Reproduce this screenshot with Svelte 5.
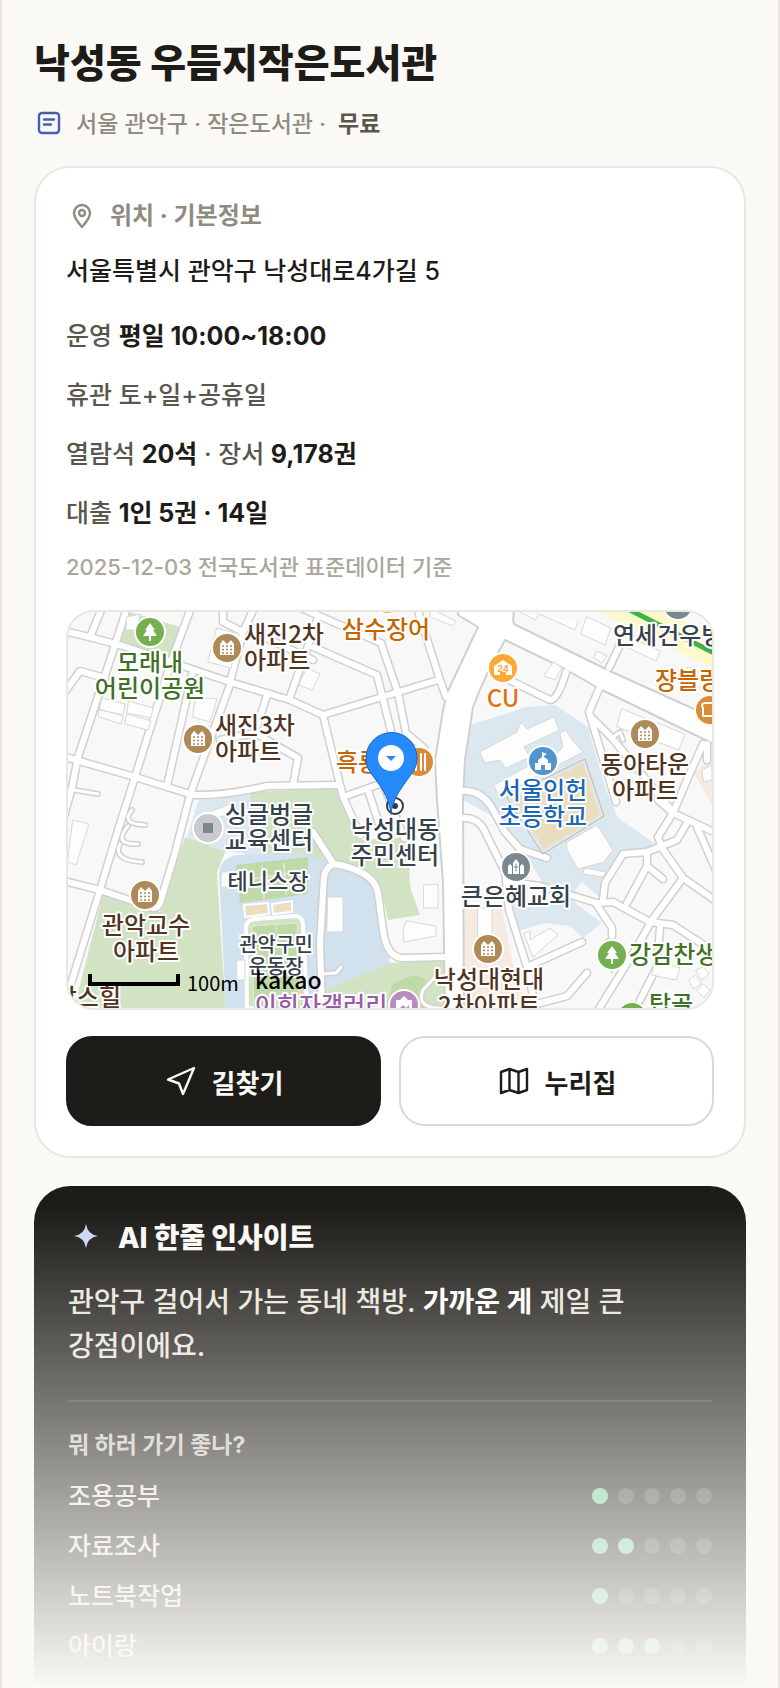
<script>
  const facts = [
    [{ t: "운영 " }, { t: "평일 10:00~18:00", b: true }],
    [{ t: "휴관 토+일+공휴일" }],
    [{ t: "열람석 " }, { t: "20석", b: true }, { t: " · 장서 " }, { t: "9,178권", b: true }],
    [{ t: "대출 " }, { t: "1인 5권 · 14일", b: true }],
  ];

  const scores = [
    { name: "조용공부", score: 1 },
    { name: "자료조사", score: 2 },
    { name: "노트북작업", score: 1 },
    { name: "아이랑", score: 3 },
  ];

  // coloured ground: parks, water, school yard
  const areas = [
    { c: "green", d: "M129 612L184 628L171 662L119 641Z" },
    { c: "green", d: "M185 837L226 850L217 872L221 940L226 1008H74L103 895L160 912Z" },
    { c: "green", d: "M250 792L338 788L350 815L362 840L400 838L413 850Q407 870 411 890L420 915L388 920L380 885L335 863L290 857L245 855Z" },
    { c: "sky", d: "M198 801Q222 792 249 793L252 812L262 856L220 850L187 837Z" },
    { c: "water", d: "M219 873Q221 857 238 855L300 853L335 863Q367 873 378 890L386 935Q388 955 391 965Q386 976 345 984L323 990V1008H226Z" },
    { c: "green", d: "M391 963L445 960V1008H324V990Q345 982 391 963Z" },
    { c: "lawn", d: "M392 985Q415 970 426 980Q418 1000 425 1008H382Q390 1000 392 985Z" },
    { c: "sky", d: "M469 725Q500 716 525 707L555 705L588 727L606 790L618 818L657 845L622 853L602 887L600 898L582 882L570 897L548 892L532 865L516 850L490 815L463 800Z" },
    { c: "sky", d: "M513 904L570 899L602 923L583 938L570 926L545 923L518 931Z" },
    { c: "peach", d: "M465 908H502L512 960L528 1008H464Z" },
    { c: "peach", d: "M694 773L712 757V805Z" },
    { c: "yellow", d: "M600 612H668L712 634V668Z" },
    { c: "lawn", d: "M236 865L308 857V894L240 903Z" },
    { c: "sand", d: "M244 905L268 903L269 914L245 917Z" },
    { c: "sand", d: "M272 904L292 901V912L273 914Z" },
    { c: "green", d: "M598 947L608 937L622 957L612 974Z" },
    { c: "green", d: "M636 1005L643 989L648 991L643 1006Z" },
  ];

  const roads = [
    "M60 630L93 638L123 646L177 664L230 682L290 700L323 715L438 680",
    "M127 608L115 645L78 757L72 788L60 830",
    "M102 608L90 637",
    "M191 608L171 662L135 777L118 830L100 890L66 1000",
    "M62 756L135 777L193 795Q225 796 267 786L338 785",
    "M193 670L167 786",
    "M231 682L190 795L175 853L160 903Q157 910 150 907L100 890L60 880",
    "M223 608V622L243 632L254 608",
    "M243 632L230 682",
    "M62 696L80 671L105 678",
    "M267 695L255 733L220 740",
    "M255 733L298 758L293 785",
    "M301 608L381 643L398 693L406 733L424 748",
    "M313 647L377 675L392 735",
    "M317 620L290 697",
    "M417 608L440 680L446 697",
    "M323 715L343 797L360 835",
    "M343 797L383 783L404 838",
    "M368 790L381 830",
    "M260 635L313 660",
    "M313 832L333 863",
    "M322 1010L320 943L324 877Q327 862 340 865Q375 873 378 893L383 930Q387 958 403 958L446 957",
    "M464 818Q480 818 486 834L505 872L509 910L527 967L536 1010",
    "M464 791Q480 790 491 806L505 832L520 849L547 858",
    "M510 882L540 886L597 903L613 902L650 922L673 925L716 953",
    "M603 900L605 883L623 854L647 852L677 840L687 823",
    "M627 903L647 866V852",
    "M647 866L663 879",
    "M658 800L673 813L716 833",
    "M673 813L658 837L662 848L683 878L716 901",
    "M683 878L652 920L637 947L597 1012",
    "M697 827L716 870",
    "M597 905L612 928V936",
    "M660 927L657 967L640 1000",
    "M527 967L582 942",
    "M533 1005L567 996L587 973",
    "M503 677L550 700Q558 700 566 672",
    "M599 689L589 712L616 802",
    "M590 716L612 738L673 812",
    "M703 744L687 780L673 813",
    "M707 744V760",
    "M609 668L620 645",
  ];

  const lanes = [
    "M74 790L98 794",
    "M132 810Q120 824 145 825",
    "M128 826Q112 845 138 844",
    "M120 844Q112 860 142 862",
    "M613 737L620 732L623 740",
    "M322 974L336 973L341 967",
    "M447 1008Q415 1010 423 990L434 978",
  ];

  const buildings = [
    "M127 617L140 614L137 630L126 630Z",
    "M217 628L239 634L231 668L208 662Z",
    "M196 697L217 699L210 722L193 717Z",
    "M102 698L125 704L123 715L100 710ZM129 701L153 708L151 718L127 713ZM99 709L123 716L121 724L99 717ZM127 714L151 721L148 730L125 724Z",
    "M73 820L89 824L76 865L68 862Z",
    "M307 668L320 674L312 690L299 685Z",
    "M424 885L438 884V908H424Z",
    "M407 921L436 926V936L404 942L403 930Z",
    "M328 897H343V932H327Z",
    "M432 609L456 621L453 626L430 617Z",
    "M587 617L611 628L605 645L581 634Z",
    "M520 612L535 620L539 614L553 620L575 630L578 622",
    "M554 662L562 668L555 680L544 676Z",
    "M597 651L607 656L602 663L594 658Z",
    "M623 634L660 651L656 661L618 643Z",
    "M688 667L712 680V693L684 680Z",
    "M622 709L685 734L679 750L617 727Z",
    "M480 752L517 732L521 722L527 729L554 717L559 730L524 747L530 757L506 768L500 760L485 763Z",
    "M494 785L530 765L538 772L563 747L560 733L566 730L572 740L583 752L535 777L500 797Z",
    "M567 842L597 825L613 850L604 862L578 869L567 850Z",
    "M585 868L606 872L603 877L583 874Z",
    "M524 933L530 931V940L550 928L558 935L533 957Z",
    "M478 908H492V948H478Z",
    "M655 960L680 968L676 980L652 975Z",
    "M696 970L703 967L709 974L702 980ZM689 980L696 975L701 984L694 989ZM703 984L710 990L704 998L697 991Z",
    "M222 872H232V887H221Z",
    "M237 960H245V980H237Z",
    "M702 770L712 765V780L704 782Z",
    "M200 816L232 803L228 815L202 822Z",
  ];

  const apartments = [[227, 648], [198, 739], [645, 734], [145, 895], [488, 949]];
  const trees = [[150, 632], [612, 955], [632, 1017]];

  const labels = [
    { x: 150, y: 671, a: "middle", c: "park", lines: ["모래내", "어린이공원"] },
    { x: 386, y: 638, a: "middle", c: "food", lines: ["삼수장어"] },
    { x: 244, y: 643, a: "start", c: "home", lines: ["새진2차", "아파트"] },
    { x: 215, y: 734, a: "start", c: "home", lines: ["새진3차", "아파트"] },
    { x: 336, y: 771, a: "start", c: "food", lines: ["흑룡"] },
    { x: 503, y: 707, a: "middle", c: "shop", lines: ["CU"] },
    { x: 613, y: 644, a: "start", c: "place", lines: ["연세건우병원"] },
    { x: 655, y: 689, a: "start", c: "food", lines: ["쟝블랑제리"] },
    { x: 645, y: 773, a: "middle", c: "home", lines: ["동아타운", "아파트"] },
    { x: 543, y: 799, a: "middle", c: "school", lines: ["서울인헌", "초등학교"] },
    { x: 269, y: 823, a: "middle", c: "place", lines: ["싱글벙글", "교육센터"] },
    { x: 395, y: 838, a: "middle", c: "place", lines: ["낙성대동", "주민센터"] },
    { x: 268, y: 889, a: "middle", c: "place medium", lines: ["테니스장"] },
    { x: 276, y: 952, a: "middle", c: "place small", lines: ["관악구민", "운동장"] },
    { x: 146, y: 934, a: "middle", c: "home", lines: ["관악교수", "아파트"] },
    { x: 516, y: 905, a: "middle", c: "place", lines: ["큰은혜교회"] },
    { x: 489, y: 988, a: "middle", c: "home", lines: ["낙성대현대", "2차아파트"] },
    { x: 321, y: 1014, a: "middle", c: "gallery", lines: ["이희자갤러리"] },
    { x: 629, y: 963, a: "start", c: "park", lines: ["강감찬생가터"] },
    { x: 649, y: 1013, a: "start", c: "park", lines: ["탑골"] },
    { x: 121, y: 1006, a: "end", c: "home", lines: ["낙스힐"] },
  ];
</script>

<main>
  <header>
    <h1>낙성동 우듬지작은도서관</h1>
    <p class="meta">
      <svg class="type-icon" viewBox="0 0 30 30" aria-hidden="true">
        <rect x="5" y="4" width="20" height="20" rx="3" />
        <path d="M10 10.5h10M10 15.5h7" />
      </svg>
      <span>서울 관악구 · 작은도서관 ·</span>
      <strong>무료</strong>
    </p>
  </header>

  <section class="card">
    <h2>
      <svg viewBox="0 0 32 32" aria-hidden="true">
        <path d="M16 27C13 23.5 8 18.5 8 13a8 8 0 0 1 16 0c0 5.5-5 10.5-8 14z" />
        <circle cx="16" cy="13" r="3" />
      </svg>
      위치 · 기본정보
    </h2>
    <p class="address">서울특별시 관악구 낙성대로4가길 5</p>
    {#each facts as fact}
      <p class="fact">
        {#each fact as part}{#if part.b}<strong>{part.t}</strong>{:else}{part.t}{/if}{/each}
      </p>
    {/each}
    <p class="source">2025-12-03 전국도서관 표준데이터 기준</p>

    <div class="map">
      <svg viewBox="68 612 644 396" role="img" aria-label="낙성동 우듬지작은도서관 지도">
        {#each areas as area}
          <path class={area.c} d={area.d} />
        {/each}

        <path class="track" d="M247 1008L246 928Q246 920 255 919L296 916Q303 917 303 926L307 1008Z" />
        <path class="pitch" d="M254 1008L252 926L297 923L300 1008ZM252 938H298M276 925V938" />
        <path class="pitch-line" d="M246 880L300 872M262 867L264 898M284 864L286 894" />

        {#each roads as d}
          <path class="road-edge" {d} />
        {/each}
        {#each lanes as d}
          <path class="lane-edge" {d} />
        {/each}
        <path
          class="avenue"
          d="M458 608V615L478 627L447 693L443 710L435 760L437 800L443 883L445 1012H464L463 800L465 760L473 707Q485 675 505 640L563 668L600 689L716 745V719L612 672L514 624Q512 618 515 608Z"
        />
        {#each roads as d}
          <path class="road" {d} />
        {/each}
        {#each lanes as d}
          <path class="lane" {d} />
        {/each}
        {#each buildings as d}
          <path class="building" {d} />
        {/each}
        <path class="yard" d="M512 798L583 763L600 815L544 849Z" />
        <path class="yard-line" d="M507 797L585 759L604 816L543 854Z" />
        <path class="subway" d="M630 610L716 654" />

        {#each apartments as [x, y]}
          <g transform="translate({x} {y})">
            <circle class="badge brown" r="15" />
            <path class="glyph" d="M-7 7V-4L-4 -8L0 -4L4 -8L7 -4V7Z" />
            <path class="windows brown-line" d="M-5 -2H6M-5 1.5H6M-5 5H6" />
          </g>
        {/each}
        {#each trees as [x, y]}
          <g transform="translate({x} {y})">
            <circle class="badge leaf" r="15" />
            <path class="glyph" d="M0 -9L5 -2H3L7 4H1V9H-1V4H-7L-3 -2H-5Z" />
          </g>
        {/each}
        <g transform="translate(503 668)">
          <circle class="badge amber" r="15" />
          <path class="glyph" d="M-9 -2L0 -8L9 -2V7H3V4H-3V7H-9Z" />
          <text class="hours" y="4">24</text>
        </g>
        <g transform="translate(419 762)">
          <circle class="badge orange" r="15" />
          <path class="cutlery" d="M2 -8V8M6 -8V8M-3 -8V8" />
        </g>
        <g transform="translate(710 710)">
          <circle class="badge orange" r="15" />
          <path class="loaf" d="M-7 6V-2Q-10 -7 -4 -7H8V6Z" />
        </g>
        <g transform="translate(543 761)">
          <circle class="badge blue" r="15" />
          <path class="glyph" d="M-8 9V2H-5V-1L-1 -4V-9L4 -7L1 -5V-4L5 -1V2H8V9H2V4H-2V9Z" />
        </g>
        <g transform="translate(208 828)">
          <circle class="badge pale" r="15" />
          <rect class="slate" x="-5" y="-5" width="10" height="10" />
        </g>
        <g transform="translate(516 867)">
          <circle class="badge slate" r="15" />
          <path class="glyph" d="M-8 7V-1L-6 -3L-4 -1V7ZM-3 7V-4L0 -8L3 -4V7ZM4 7V-1L6 -3L8 -1V7Z" />
          <path class="cross" d="M0 -3V4M-2 0H2" />
        </g>
        <g transform="translate(404 1005)">
          <circle class="badge violet" r="15" />
          <path class="glyph" d="M-8 -5H-4L0 -9L4 -5H8V8H-8Z" />
          <path class="violet" d="M-5 4L-1 0L2 3L5 0V6H-5Z" />
        </g>
        <circle class="badge slate" cx="678" cy="605" r="15" />
        <circle class="badge amber" cx="387" cy="600" r="14" />

        <circle class="target" cx="395" cy="806" r="8" />
        <circle class="target-dot" cx="395" cy="806" r="3" />

        {#each labels as label}
          <text class="label {label.c}" text-anchor={label.a}>
            {#each label.lines as line, i}
              <tspan x={label.x} y={label.y + i * (label.c.includes("small") ? 22 : 26)}>{line}</tspan>
            {/each}
          </text>
        {/each}

        <path
          class="pin"
          d="M391 813C389 800 384 791 376 780C369 771 366 767 366 758A25.5 25.5 0 0 1 417 758C417 767 413 772 407 780C399 791 393 800 391 813Z"
        />
        <circle class="glyph" cx="391" cy="758" r="13" />
        <path class="arrow" d="M386 756H396L391 761Z" />

        <path class="scale" d="M90 974V984H178V974" />
        <text class="scale-text" x="187" y="991">100m</text>
        <text class="brand" x="255" y="989">kakao</text>
      </svg>
    </div>

    <div class="actions">
      <a class="button dark" href="#directions">
        <svg viewBox="0 0 34 34" aria-hidden="true">
          <path d="M30 4L4 15.5L15 19.5L19 30Z" />
        </svg>
        길찾기
      </a>
      <a class="button" href="#homepage">
        <svg viewBox="0 0 34 34" aria-hidden="true">
          <path d="M4 8L12.5 5L21.5 8L30 5V26L21.5 29L12.5 26L4 29ZM12.5 5V26M21.5 8V29" />
        </svg>
        누리집
      </a>
    </div>
  </section>

  <section class="insight">
    <h2>
      <svg viewBox="0 0 36 36" aria-hidden="true">
        <path d="M18 4Q19.500 14.500 30 16Q19.500 17.500 18 28Q16.500 17.500 6 16Q16.500 14.500 18 4Z" />
      </svg>
      AI 한줄 인사이트
    </h2>
    <p class="summary">관악구 걸어서 가는 동네 책방. <strong>가까운 게</strong> 제일 큰 강점이에요.</p>
    <h3>뭐 하러 가기 좋나?</h3>
    <ul>
      {#each scores as item}
        <li>
          <span>{item.name}</span>
          <span class="dots" role="img" aria-label="{item.score}/5">
            {#each [1, 2, 3, 4, 5] as n}
              <i class:on={n <= item.score}></i>
            {/each}
          </span>
        </li>
      {/each}
    </ul>
  </section>

  <div class="fade"></div>
</main>

<style>
  :global(body) {
    background: #faf9f5;
  }

  main {
    position: relative;
    box-sizing: border-box;
    display: flex;
    flex-direction: column;
    height: 100vh;
    min-height: 1200px;
    padding: 36px 32px 0;
    border: solid #e9e7e0;
    border-width: 0 2px;
    overflow: hidden;
    background: #faf9f5;
    color: #1e1c18;
    font-family: Inter, "Noto Sans CJK KR", sans-serif;
    font-weight: 500;
    word-break: keep-all;
  }

  h1,
  h2,
  h3,
  p,
  ul {
    margin: 0;
    padding: 0;
  }

  h1 {
    font-size: 39px;
    font-weight: 800;
    line-height: 54px;
  }

  svg {
    flex: none;
    fill: none;
    stroke: currentColor;
    stroke-width: 2.4;
    stroke-linecap: round;
    stroke-linejoin: round;
  }

  .meta {
    display: flex;
    align-items: center;
    margin: 16px 0 24px;
    color: #8f8b80;
    font-size: 23px;
    line-height: 36px;
  }

  .meta strong {
    margin-left: 12px;
    color: #59564e;
    font-weight: 700;
  }

  .type-icon {
    width: 30px;
    height: 30px;
    margin-right: 12px;
    color: #4560b0;
  }

  .card {
    flex: none;
    padding: 30px;
    border: 2px solid #e9e7e0;
    border-radius: 36px;
    background: #fff;
  }

  h2 {
    display: flex;
    align-items: center;
  }

  .card h2 {
    gap: 12px;
    margin-bottom: 18px;
    color: #8f8b80;
    font-size: 24px;
    font-weight: 700;
    line-height: 36px;
  }

  .card h2 svg {
    width: 32px;
    height: 32px;
  }

  .address {
    margin-bottom: 22px;
    font-size: 25px;
    line-height: 38px;
  }

  .fact {
    margin-bottom: 11px;
    color: #59564e;
    font-size: 25px;
    line-height: 48px;
  }

  .fact strong {
    color: #1e1c18;
    font-weight: 700;
  }

  .source {
    margin-bottom: 24px;
    color: #aaa699;
    font-size: 22px;
    line-height: 38px;
  }

  .map {
    border: 2px solid #e9e7e0;
    border-radius: 28px;
    overflow: hidden;
    background: #f8f8f8;
  }

  .map svg {
    display: block;
    width: 100%;
    stroke: none;
  }

  .green {
    fill: #d2e3c4;
  }

  .lawn {
    fill: #c0d9a9;
  }

  .sky {
    fill: #dce8f0;
  }

  .water {
    fill: #d1e2ee;
  }

  .peach {
    fill: #f5ebe0;
  }

  .yellow {
    fill: #fdf9c9;
  }

  .sand {
    fill: #ecdfc0;
    stroke: #fff;
    stroke-width: 2;
  }

  .track {
    fill: #d2e3c4;
    stroke: #fff;
    stroke-width: 4;
  }

  .pitch {
    fill: #c0d9a9;
    stroke: #dcebcf;
    stroke-width: 1;
  }

  .pitch-line {
    stroke: #dcebcf;
    stroke-width: 2;
  }

  .road-edge {
    stroke: #d0d0d0;
    stroke-width: 9;
  }

  .road {
    stroke: #fff;
    stroke-width: 6;
  }

  .lane-edge {
    stroke: #d0d0d0;
    stroke-width: 6;
  }

  .lane {
    stroke: #fff;
    stroke-width: 3;
  }

  .avenue {
    fill: #fff;
    stroke: #d0d0d0;
    stroke-width: 2;
  }

  .building {
    fill: #fdfdfd;
    stroke: #d8d8d8;
    stroke-width: 1;
  }

  .yard {
    fill: #eaddbd;
  }

  .yard-line {
    stroke: #c9b697;
    stroke-width: 1;
  }

  .subway {
    stroke: #3cb44a;
    stroke-width: 5;
  }

  .badge {
    stroke: #fff;
    stroke-width: 2;
  }

  .brown {
    fill: #ad8a58;
  }

  .brown-line {
    stroke: #ad8a58;
  }

  .leaf {
    fill: #74b04f;
  }

  .amber {
    fill: #fda934;
  }

  .orange {
    fill: #d98c38;
  }

  .blue {
    fill: #5294d0;
  }

  .pale {
    fill: #c9cbd0;
  }

  .slate {
    fill: #7b8890;
  }

  .violet {
    fill: #b88cc0;
  }

  .glyph {
    fill: #fff;
  }

  .windows {
    stroke-width: 1.5;
    stroke-dasharray: 2;
    stroke-linecap: butt;
  }

  .hours {
    fill: #fda934;
    font-size: 9px;
    font-weight: 700;
    text-anchor: middle;
  }

  .cutlery,
  .loaf {
    stroke: #fff;
    stroke-width: 2;
  }

  .cross {
    stroke: #7b8890;
    stroke-width: 1;
  }

  .target {
    fill: #fff;
    stroke: #333b42;
    stroke-width: 2;
  }

  .target-dot {
    fill: #333b42;
  }

  .label {
    stroke: #fff;
    stroke-width: 4;
    paint-order: stroke;
    font-family: "Noto Sans CJK KR", sans-serif;
    font-size: 24px;
    font-weight: 500;
  }

  .medium {
    font-size: 22px;
  }

  .small {
    font-size: 20px;
  }

  .park {
    fill: #3f7126;
  }

  .food {
    fill: #c56500;
  }

  .shop {
    fill: #e0740f;
  }

  .home {
    fill: #51341f;
  }

  .place {
    fill: #35424b;
  }

  .school {
    fill: #1c67b3;
  }

  .gallery {
    fill: #985ba5;
  }

  .pin {
    fill: #258bfc;
    stroke: #1561c4;
    stroke-width: 1;
  }

  .arrow {
    fill: #258bfc;
  }

  .scale {
    stroke: #000;
    stroke-width: 4;
    stroke-linecap: butt;
    stroke-linejoin: miter;
  }

  .scale-text,
  .brand {
    fill: #000;
    font-family: "Noto Sans CJK KR", sans-serif;
    font-size: 20px;
    font-weight: 400;
  }

  .brand {
    font-size: 23px;
    font-weight: 500;
  }

  .actions {
    display: grid;
    grid-template-columns: 1fr 1fr;
    gap: 18px;
    margin-top: 26px;
  }

  .button {
    display: flex;
    align-items: center;
    justify-content: center;
    gap: 14px;
    box-sizing: border-box;
    height: 90px;
    border: 2px solid #dcdad0;
    border-radius: 26px;
    color: #1e1c18;
    font-size: 26px;
    font-weight: 700;
    text-decoration: none;
  }

  .button svg {
    width: 34px;
    height: 34px;
  }

  .dark {
    border-color: #1e1c18;
    background: #1e1c18;
    color: #faf9f5;
  }

  .insight {
    flex: 1;
    margin-top: 28px;
    padding: 32px 34px;
    border-radius: 36px 36px 0 0;
    background: #1e1c18;
    color: #f3f0e8;
  }

  .insight h2 {
    gap: 14px;
    margin-bottom: 22px;
    color: #faf9f5;
    font-size: 28px;
    font-weight: 800;
    line-height: 40px;
  }

  .insight h2 svg {
    width: 36px;
    height: 36px;
    fill: #cad6f5;
    stroke: none;
  }

  .summary {
    padding-bottom: 32px;
    border-bottom: 2px solid #393733;
    color: #e8e5dc;
    font-size: 28px;
    line-height: 44px;
  }

  .summary strong {
    color: #fff;
    font-weight: 700;
  }

  h3 {
    margin: 26px 0 8px;
    color: #c8c5bb;
    font-size: 23px;
    font-weight: 700;
    line-height: 35px;
  }

  ul {
    list-style: none;
  }

  li {
    display: flex;
    align-items: center;
    justify-content: space-between;
    color: #e8e5dc;
    font-size: 25px;
    line-height: 50px;
  }

  .dots {
    display: flex;
    gap: 10px;
  }

  .dots i {
    width: 16px;
    height: 16px;
    border-radius: 50%;
    background: #44423e;
  }

  .dots .on {
    background: #6fcfa2;
  }

  .fade {
    position: absolute;
    right: -2px;
    bottom: 0;
    left: -2px;
    height: 480px;
    background: linear-gradient(rgba(250, 249, 245, 0), #faf9f5);
    pointer-events: none;
  }
</style>
